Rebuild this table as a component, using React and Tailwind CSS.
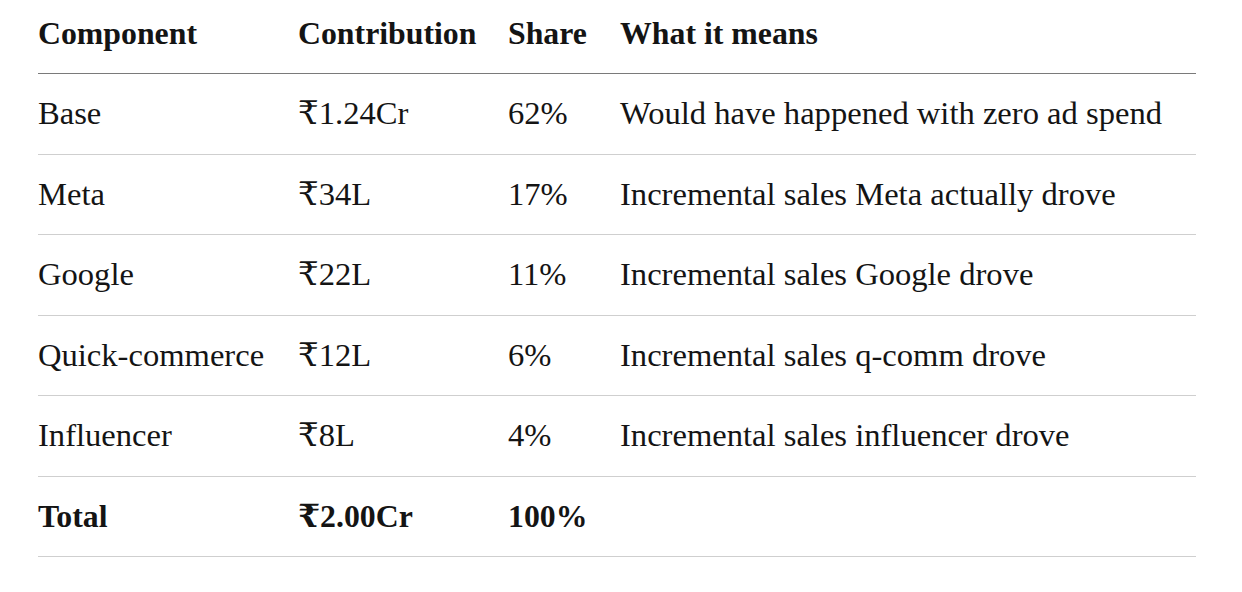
export default function App() {
  const rows = [
    ["Base", "₹1.24Cr", "62%", "Would have happened with zero ad spend"],
    ["Meta", "₹34L", "17%", "Incremental sales Meta actually drove"],
    ["Google", "₹22L", "11%", "Incremental sales Google drove"],
    ["Quick-commerce", "₹12L", "6%", "Incremental sales q-comm drove"],
    ["Influencer", "₹8L", "4%", "Incremental sales influencer drove"],
  ];
  const grid = "grid grid-cols-[260px_210px_112px_1fr] items-center";
  return (
    <div
      className="w-[1242px] h-[592px] bg-white text-[#141414] leading-[1.15]"
      style={{ fontFamily: '"Liberation Serif", "DejaVu Serif", serif' }}
    >
      <div className="ml-[38px] w-[1158px]">
        <div className={`${grid} h-[74px] pb-[5px] border-b border-[#7a7a7a] font-bold text-[31.8px]`}>
          <div>Component</div>
          <div>Contribution</div>
          <div>Share</div>
          <div>What it means</div>
        </div>
        {rows.map((r) => (
          <div key={r[0]} className={`${grid} h-[80.5px] border-b border-[#cfcfcf] text-[32.6px]`}>
            <div>{r[0]}</div>
            <div>{r[1]}</div>
            <div>{r[2]}</div>
            <div>{r[3]}</div>
          </div>
        ))}
        <div className={`${grid} h-[80.5px] pt-[3px] border-b border-[#cfcfcf] font-bold text-[31.8px]`}>
          <div>Total</div>
          <div>₹2.00Cr</div>
          <div>100%</div>
          <div></div>
        </div>
      </div>
    </div>
  );
}
